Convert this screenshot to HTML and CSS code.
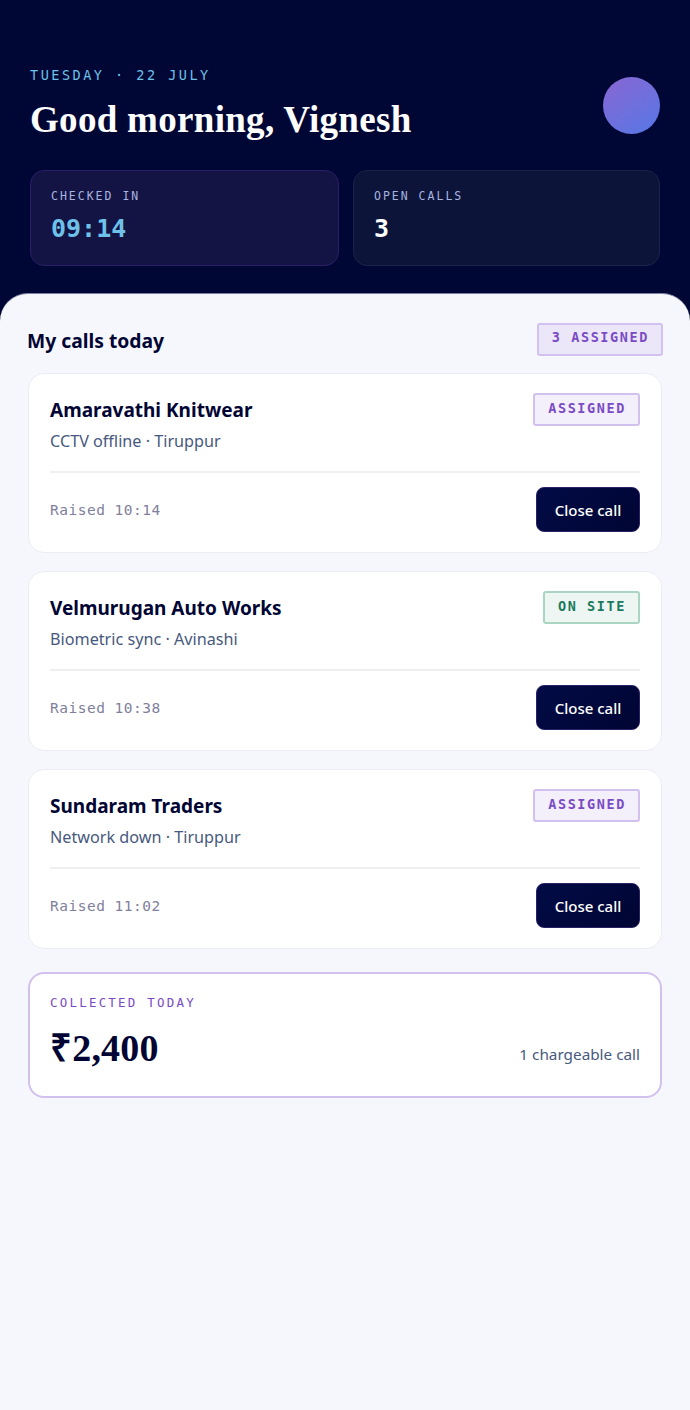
FILE: index.html
```html
<!DOCTYPE html>
<html lang="en">
<head>
    <meta charset="UTF-8">
    <meta name="viewport" content="width=device-width, initial-scale=1.0">
    <title>My calls</title>
    <link rel="stylesheet" href="styles.css">
</head>
<body>
    <!-- Header -->
    <header class="hero">
        <div class="hero-top">
            <div>
                <div class="date">TUESDAY · 22 JULY</div>
                <h1>Good morning, Vignesh</h1>
            </div>
            <div class="avatar"></div>
        </div>
        <div class="stats">
            <div class="stat stat-purple">
                <div class="stat-label">CHECKED IN</div>
                <div class="stat-value stat-blue">09:14</div>
            </div>
            <div class="stat">
                <div class="stat-label">OPEN CALLS</div>
                <div class="stat-value">3</div>
            </div>
        </div>
    </header>

    <!-- Calls -->
    <main class="sheet">
        <div class="sheet-head">
            <h2>My calls today</h2>
            <span class="tag tag-count">3 ASSIGNED</span>
        </div>

        <div class="call">
            <div class="call-top">
                <div>
                    <div class="call-name">Amaravathi Knitwear</div>
                    <div class="call-desc">CCTV offline · Tiruppur</div>
                </div>
                <span class="tag">ASSIGNED</span>
            </div>
            <div class="call-bottom">
                <span class="raised">Raised 10:14</span>
                <button>Close call</button>
            </div>
        </div>

        <div class="call">
            <div class="call-top">
                <div>
                    <div class="call-name">Velmurugan Auto Works</div>
                    <div class="call-desc">Biometric sync · Avinashi</div>
                </div>
                <span class="tag tag-green">ON SITE</span>
            </div>
            <div class="call-bottom">
                <span class="raised">Raised 10:38</span>
                <button>Close call</button>
            </div>
        </div>

        <div class="call">
            <div class="call-top">
                <div>
                    <div class="call-name">Sundaram Traders</div>
                    <div class="call-desc">Network down · Tiruppur</div>
                </div>
                <span class="tag">ASSIGNED</span>
            </div>
            <div class="call-bottom">
                <span class="raised">Raised 11:02</span>
                <button>Close call</button>
            </div>
        </div>

        <div class="collected">
            <div class="collected-label">COLLECTED TODAY</div>
            <div class="collected-row">
                <span class="amount">₹2,400</span>
                <span class="chargeable">1 chargeable call</span>
            </div>
        </div>
    </main>
</body>
</html>
```

FILE: styles.css
```css
* {
    box-sizing: border-box;
}

body {
    margin: 0;
    min-height: 100vh;
    background-color: #f6f7fc;
    color: #000533;
    font-family: 'Noto Sans', Arial, sans-serif;
}

.hero {
    background-color: #000735;
    height: 321px;
    padding: 67px 30px 0;
}

.hero-top {
    display: flex;
    justify-content: space-between;
    align-items: flex-start;
}

.date {
    font-family: 'DejaVu Sans Mono', monospace;
    font-size: 13.5px;
    line-height: 16px;
    letter-spacing: 2.5px;
    color: #6ec1e8;
}

h1 {
    margin: 14px 0 0;
    font-family: 'Liberation Serif', serif;
    font-size: 37px;
    line-height: 46px;
    font-weight: 700;
    letter-spacing: 0.3px;
    color: #fff;
}

.avatar {
    width: 57px;
    height: 57px;
    margin-top: 10px;
    border-radius: 50%;
    background: linear-gradient(145deg, #8a66d2, #5578e6);
}

.stats {
    display: grid;
    grid-template-columns: 309px 307px;
    gap: 14px;
    margin-top: 27px;
}

.stat {
    height: 96px;
    padding: 18px 20px;
    background-color: #0c1439;
    border: 1px solid #1d2348;
    border-radius: 14px;
}

.stat-purple {
    background-color: #131444;
    border-color: #2a1f66;
}

.stat-label {
    font-family: 'DejaVu Sans Mono', monospace;
    font-size: 11.5px;
    line-height: 14px;
    letter-spacing: 2px;
    color: #a9b4e0;
}

.stat-value {
    margin-top: 10px;
    font-family: 'DejaVu Sans Mono', monospace;
    font-size: 25px;
    line-height: 32px;
    font-weight: 700;
    color: #fff;
}

.stat-blue {
    color: #6ec1e8;
}

.sheet {
    margin-top: -28px;
    padding: 29px 28px 28px;
    background-color: #f6f7fc;
    border-top: 1px solid #7d80a0;
    border-radius: 28px 28px 0 0;
    position: relative;
}

.sheet-head {
    display: flex;
    justify-content: space-between;
    align-items: center;
    margin-bottom: 17px;
}

h2 {
    margin: 0 0 0 -1px;
    padding-top: 2px;
    font-size: 19.3px;
    font-weight: 700;
    color: #000533;
}

.tag {
    height: 33px;
    padding: 0 12px 0 13px;
    font-family: 'DejaVu Sans Mono', monospace;
    font-size: 13.5px;
    line-height: 26px;
    font-weight: 700;
    letter-spacing: 1.6px;
    color: #7a4bc4;
    background-color: #f3effb;
    border: 2px solid #d2c0ee;
    border-radius: 3px;
}

.tag-count {
    line-height: 25px;
    background-color: #ece7f8;
    margin-right: -1px;
}

.tag-green {
    color: #1c7a5c;
    background-color: #edf6f2;
    border-color: #a9d5c2;
}

.call {
    height: 180px;
    margin-bottom: 18px;
    padding: 19px 21px 0;
    background-color: #fff;
    border: 1px solid #ecedf4;
    border-radius: 16px;
}

.call-top {
    display: flex;
    justify-content: space-between;
    align-items: flex-start;
    height: 80px;
    border-bottom: 2px solid #eeeef3;
}

.call-name {
    margin-top: 4px;
    font-size: 19px;
    line-height: 26px;
    font-weight: 700;
    color: #000533;
}

.call-desc {
    margin-top: 7px;
    font-size: 16.2px;
    line-height: 22px;
    color: #47597e;
}

.call-bottom {
    display: flex;
    justify-content: space-between;
    align-items: center;
    margin-top: 14px;
}

.raised {
    font-family: 'DejaVu Sans Mono', monospace;
    font-size: 14.5px;
    letter-spacing: 0.5px;
    color: #80809c;
}

button {
    width: 104px;
    height: 45px;
    background: linear-gradient(135deg, #020b46, #000533);
    border: 1px solid #2a2266;
    border-radius: 8px;
    color: #fff;
    font-family: 'Noto Sans', Arial, sans-serif;
    font-size: 15px;
    font-weight: 500;
}

.collected {
    height: 126px;
    margin-top: 23px;
    padding: 21px 20px 0;
    background-color: #fff;
    border: 2px solid #d2c0ee;
    border-radius: 16px;
}

.collected-label {
    font-family: 'DejaVu Sans Mono', monospace;
    font-size: 12.5px;
    line-height: 16px;
    letter-spacing: 2.2px;
    color: #7a4bc4;
}

.collected-row {
    display: flex;
    justify-content: space-between;
    align-items: flex-end;
    margin-top: 14px;
}

.amount {
    font-family: 'Liberation Serif', serif;
    font-size: 38px;
    line-height: 46px;
    font-weight: 700;
    letter-spacing: 0.2px;
    color: #000533;
}

.chargeable {
    margin-bottom: 6px;
    font-size: 15.3px;
    line-height: 22px;
    color: #47597e;
}
```
